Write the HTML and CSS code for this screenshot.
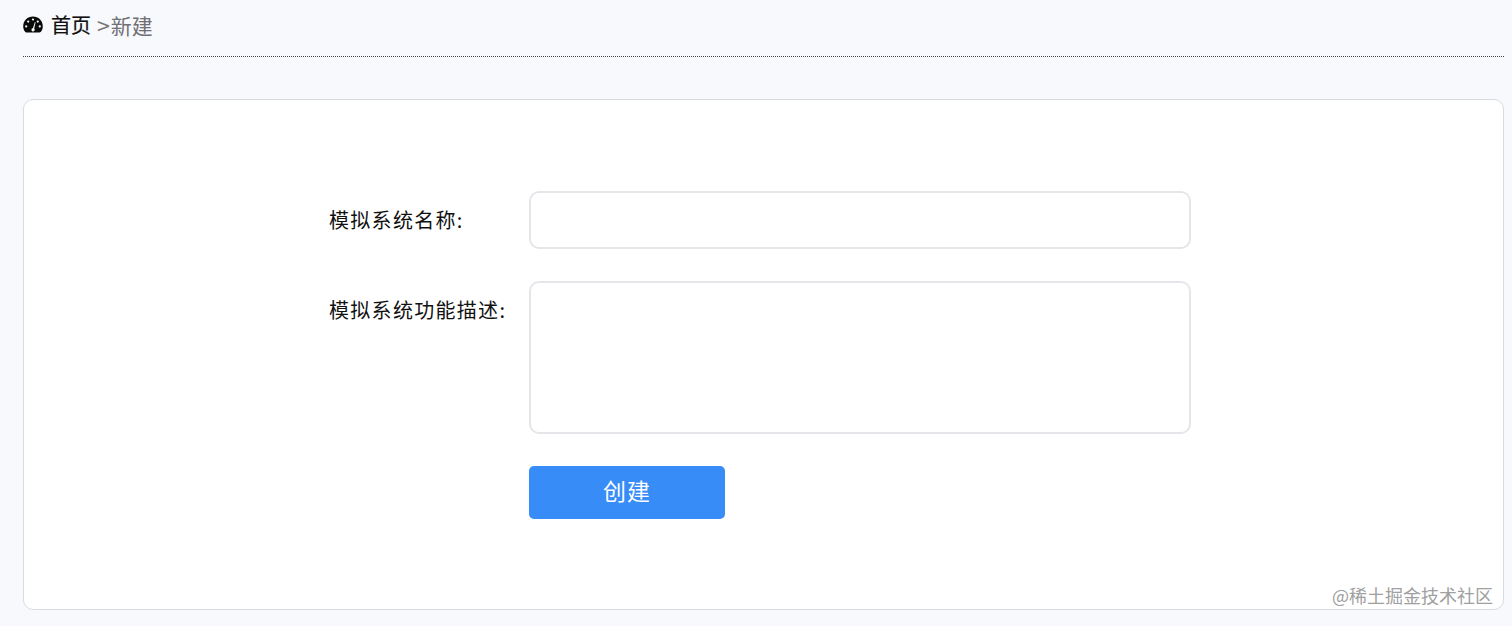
FILE: index.html
```html
<!DOCTYPE html>
<html lang="zh">
<head>
<meta charset="utf-8">
<title>新建</title>
<link rel="stylesheet" href="styles.css">
</head>
<body>
<div class="page">
  <header class="crumbs">
    <svg class="gauge" viewBox="0 0 20 17" aria-hidden="true">
      <path class="gauge-body" d="M10 0.5C4.6 0.5 0.2 4.7 0.2 10.2c0 2.400 0.800 4.500 2.200 5.900 0.400 0.400 0.900 0.500 1.300 0.500h12.600c0.500 0 1-0.200 1.300-0.500 1.400-1.400 2.200-3.500 2.200-5.900C19.800 4.700 15.400 0.500 10 0.500z"/>
      <circle class="gauge-dot" cx="3.200" cy="10.400" r="1.100"/>
      <circle class="gauge-dot" cx="5.200" cy="5.600" r="1.100"/>
      <circle class="gauge-dot" cx="10" cy="3.500" r="1.100"/>
      <circle class="gauge-dot" cx="14.800" cy="5.600" r="1.100"/>
      <circle class="gauge-dot" cx="16.800" cy="10.400" r="1.100"/>
      <path class="gauge-dot" d="M11.900 6l0.700 0.200-1.400 6.300c0.400 0.400 0.600 1 0.500 1.600-0.200 0.900-1 1.500-1.900 1.300-0.900-0.200-1.500-1-1.300-1.900 0.100-0.800 0.800-1.300 1.500-1.400z"/>
    </svg>
    <span class="crumb-home">首页</span>
    <span class="crumb-sep">&gt;</span><span class="crumb-current">新建</span>
  </header>
  <main class="card">
    <form class="form">
      <div class="row">
        <label class="label">模拟系统名称:</label>
        <input class="field field-input" type="text">
      </div>
      <div class="row">
        <label class="label">模拟系统功能描述:</label>
        <textarea class="field field-area"></textarea>
      </div>
      <div class="row row-action">
        <button class="submit" type="button">创建</button>
      </div>
    </form>
    <div class="watermark">@稀土掘金技术社区</div>
  </main>
</div>
</body>
</html>
```
FILE: styles.css
```css
* { box-sizing: border-box; }
html, body { margin: 0; height: 100%; }
body {
  background: #f8f9fd;
  font-family: "Noto Sans CJK SC", "Liberation Sans", sans-serif;
  overflow: hidden;
}
.page { padding: 0 8px 16px 23px; }
.crumbs {
  display: flex;
  align-items: center;
  height: 57px;
  padding-bottom: 7px;
  border-bottom: 1px dotted #444;
  font-size: 20px;
  line-height: 28px;
}
.gauge { width: 20px; height: 17px; margin-right: 8px; flex: none; }
.gauge-body { fill: #0a0a0a; }
.gauge-dot { fill: #f8f9fd; }
.crumb-home { color: #111; -webkit-text-stroke: 0.2px #111; }
.crumb-sep { color: #77777c; margin-left: 6px; margin-right: 1px; font-size: 23px; }
.crumb-current { color: #6f6f74; font-size: 21px; }
.card {
  position: relative;
  height: 511px;
  margin-top: 42px;
  padding-top: 91px;
  background: #fff;
  border: 1px solid #d8dbe2;
  border-radius: 10px;
}
.form { display: flex; flex-direction: column; gap: 32px; padding-left: 305px; }
.row { display: flex; align-items: flex-start; }
.row-action { padding-left: 200px; }
.label {
  width: 200px;
  flex: none;
  padding-top: 14px;
  font-size: 20px;
  line-height: 30px;
  letter-spacing: 1.300px;
  color: #111;
}
.field {
  display: block;
  width: 662px;
  padding: 8px 12px;
  background: #fff;
  border: 2px solid #e4e6ea;
  border-radius: 10px;
  outline: none;
  resize: none;
  font: inherit;
}
.field-input { height: 58px; }
.field-area { height: 153px; }
.submit {
  width: 196px;
  height: 53px;
  padding: 0 0 6px;
  border: 0;
  border-radius: 5px;
  background: #388cf8;
  color: #fff;
  font-family: inherit;
  font-size: 23px;
  letter-spacing: 1px;
}
.watermark {
  position: absolute;
  right: 10px;
  bottom: 1px;
  font-size: 18px;
  line-height: 26px;
  color: #a0a0a0;
}
```
